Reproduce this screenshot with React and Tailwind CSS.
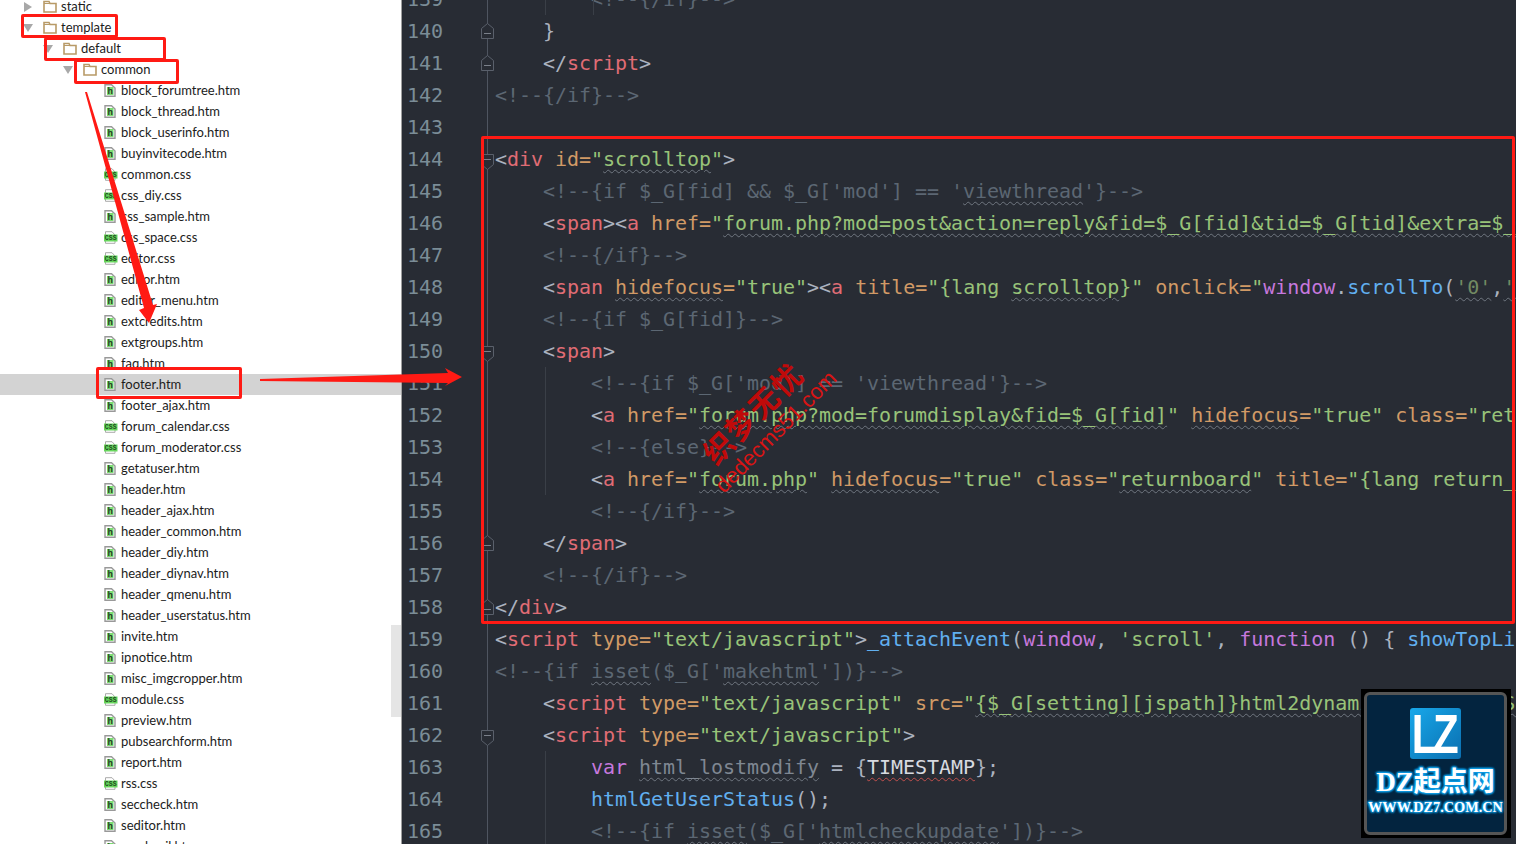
const files = [
  'block_forumtree.htm', 'block_thread.htm', 'block_userinfo.htm', 'buyinvitecode.htm', 'common.css', 'css_diy.css',
  'css_sample.htm', 'css_space.css', 'editor.css', 'editor.htm', 'editor_menu.htm', 'extcredits.htm', 'extgroups.htm',
  'faq.htm', 'footer.htm', 'footer_ajax.htm', 'forum_calendar.css', 'forum_moderator.css', 'getatuser.htm', 'header.htm',
  'header_ajax.htm', 'header_common.htm', 'header_diy.htm', 'header_diynav.htm', 'header_qmenu.htm',
  'header_userstatus.htm', 'invite.htm', 'ipnotice.htm', 'misc_imgcropper.htm', 'module.css', 'preview.htm',
  'pubsearchform.htm', 'report.htm', 'rss.css', 'seccheck.htm', 'seditor.htm', 'sendmail.htm',
];

const colors = {
  p: 'text-[#abb2bf]',
  c: 'text-[#5c6773]',
  t: 'text-[#e06c75]',
  a: 'text-[#d19a66]',
  s: 'text-[#98c379]',
  d: 'text-[#728a62]',
  b: 'text-[#61afef]',
  v: 'text-[#c678dd]',
  g: 'text-[#7f8792]',
  w: 'text-[#d7dae0]',
};

const wavy = 'underline decoration-wavy decoration-[0.5px] decoration-[#6f7680] underline-offset-[3px]';
const wavyRed = 'underline decoration-wavy decoration-[0.5px] decoration-[#c0504d] underline-offset-[3px]';

// [line no, indent, fold marker, guides, tokens] - token is [colour, text, underline]
const lines = [
  [139, 8, null, [48, 96], [['c', '<!--{/if}-->']]],
  [140, 4, 'close', [], [['p', '}']]],
  [141, 4, 'close', [], [['p', '</'], ['t', 'script'], ['p', '>']]],
  [142, 0, null, [], [['c', '<!--{/if}-->']]],
  [143, 0, null, [], []],
  [144, 0, 'open', [], [['p', '<'], ['t', 'div'], ['a', ' id='], ['s', '"'], ['s', 'scrolltop', 1], ['s', '"'], ['p', '>']]],
  [145, 4, null, [], [['c', "<!--{if $_G[fid] && $_G['mod'] == '"], ['c', 'viewthread', 1], ['c', "'}-->"]]],
  [146, 4, null, [], [['p', '<'], ['t', 'span'], ['p', '><'], ['t', 'a'], ['a', ' href='], ['s', '"'], ['s', 'forum.php?mod=post&action=reply&fid=$_G[fid]&tid=$_G[tid]&extra=$_G[extra]', 1]]],
  [147, 4, null, [], [['c', '<!--{/if}-->']]],
  [148, 4, null, [], [['p', '<'], ['t', 'span'], ['a', ' '], ['a', 'hidefocus', 1], ['a', '='], ['s', '"true"'], ['p', '><'], ['t', 'a'], ['a', ' title='], ['s', '"{lang '], ['s', 'scrolltop', 1], ['s', '}"'], ['a', ' onclick='], ['s', '"'], ['v', 'window'], ['p', '.'], ['b', 'scrollTo'], ['p', '('], ['d', "'0'", 1], ['p', ','], ['d', "'0'", 1]]],
  [149, 4, null, [], [['c', '<!--{if $_G[fid]}-->']]],
  [150, 4, 'open', [], [['p', '<'], ['t', 'span'], ['p', '>']]],
  [151, 8, null, [48], [['c', "<!--{if $_G['mod'] == 'viewthread'}-->"]]],
  [152, 8, null, [48], [['p', '<'], ['t', 'a'], ['a', ' href='], ['s', '"'], ['s', 'forum.php?mod=forumdisplay&fid=$_G[fid]', 1], ['s', '"'], ['a', ' '], ['a', 'hidefocus', 1], ['a', '='], ['s', '"true"'], ['a', ' class='], ['s', '"returnboard"']]],
  [153, 8, null, [48], [['c', '<!--{else}-->']]],
  [154, 8, null, [48], [['p', '<'], ['t', 'a'], ['a', ' href='], ['s', '"'], ['s', 'forum.php', 1], ['s', '"'], ['a', ' '], ['a', 'hidefocus', 1], ['a', '='], ['s', '"true"'], ['a', ' class='], ['s', '"'], ['s', 'returnboard', 1], ['s', '"'], ['a', ' title='], ['s', '"{lang return_forum}"']]],
  [155, 8, null, [], [['c', '<!--{/if}-->']]],
  [156, 4, 'close', [], [['p', '</'], ['t', 'span'], ['p', '>']]],
  [157, 4, null, [], [['c', '<!--{/if}-->']]],
  [158, 0, 'close', [], [['p', '</'], ['t', 'div'], ['p', '>']]],
  [159, 0, null, [], [['p', '<'], ['t', 'script'], ['a', ' type='], ['s', '"text/javascript"'], ['p', '>'], ['b', '_attachEvent'], ['p', '('], ['v', 'window'], ['p', ', '], ['s', "'scroll'"], ['p', ', '], ['v', 'function'], ['p', ' () { '], ['b', 'showTopLink'], ['p', '(); });']]],
  [160, 0, null, [], [['c', '<!--{if '], ['c', 'isset', 1], ['c', "($_G['"], ['c', 'makehtml', 1], ['c', "'])}-->"]]],
  [161, 4, null, [], [['p', '<'], ['t', 'script'], ['a', ' type='], ['s', '"text/javascript"'], ['a', ' src='], ['s', '"'], ['s', '{$_G[setting][jspath]}html2dynamic.js?{VERHASH}', 1], ['s', '"'], ['p', '>']]],
  [162, 4, 'open', [], [['p', '<'], ['t', 'script'], ['a', ' type='], ['s', '"text/javascript"'], ['p', '>']]],
  [163, 8, null, [48], [['v', 'var'], ['g', ' '], ['g', 'html_lostmodify', 1], ['p', ' = {'], ['w', 'TIMESTAMP', 2], ['p', '};']]],
  [164, 8, null, [48], [['b', 'htmlGetUserStatus'], ['p', '();']]],
  [165, 8, null, [48], [['c', '<!--{if '], ['c', 'isset', 1], ['c', "($_G['"], ['c', 'htmlcheckupdate', 1], ['c', "'])}-->"]]],
];

const Arrow = ({ open }) => (
  <svg width="10" height="10" viewBox="0 0 10 10" className="mr-[10px] shrink-0">
    {open ? <path d="M0 1h10L5 9z" fill="#a8a8a8" /> : <path d="M1 0l8 5-8 5z" fill="#a8a8a8" />}
  </svg>
);

const Folder = () => (
  <svg width="14" height="13" viewBox="0 0 14 13" className="mr-[4px] shrink-0">
    <path d="M1 12V1.5h5l1 2h6V12z" fill="#fff" stroke="#b89a67" strokeWidth="1.6" />
    <path d="M1 3.5h12" stroke="#b89a67" strokeWidth="1" />
  </svg>
);

const HtmIcon = () => (
  <svg width="13" height="13" viewBox="0 0 13 13" className="mr-[4px] shrink-0">
    <path d="M1 .7h6.5L11 4v8.3H1z" fill="#fff" stroke="#999" strokeWidth="1.4" />
    <rect x="3" y="3" width="6.5" height="8" fill="#7ddc72" />
    <text x="6.2" y="10" textAnchor="middle" fontSize="9" fontWeight="700" fontFamily="Liberation Mono, monospace" fill="#1e3a22">h</text>
  </svg>
);

const CssIcon = () => (
  <svg width="14" height="13" viewBox="0 0 14 13" className="mr-[3px] shrink-0">
    <path d="M1.5.7h6.5L11 4v8.3H1.5z" fill="#fff" stroke="#aaa" />
    <rect x="0" y="3.5" width="13.5" height="7" fill="#67d65c" />
    <text x="6.7" y="9.3" textAnchor="middle" fontSize="6.5" fontWeight="700" fontFamily="Liberation Mono, monospace" fill="#1c4a1e">CSS</text>
  </svg>
);

const FolderRow = ({ pad, open, name }) => (
  <div className={`flex items-center h-[21px] ${pad}`}>
    <Arrow open={open} />
    <Folder />
    <span>{name}</span>
  </div>
);

const FileRow = ({ name }) => (
  <div className={`flex items-center h-[21px] pl-[104px] ${name === 'footer.htm' ? 'bg-[#d3d3d3]' : ''}`}>
    {name.endsWith('.css') ? <CssIcon /> : <HtmIcon />}
    <span>{name}</span>
  </div>
);

const Fold = ({ kind }) => (
  <svg width="15" height="32" viewBox="0 0 15 32" className="shrink-0">
    <path d="M7.5 0v32" stroke="#4f5560" />
    {kind === 'open' && <path d="M1.5 11.5h12v10l-6 5-6-5z" fill="#282c34" stroke="#5a606b" />}
    {kind === 'open' && <path d="M4 16.5h7" stroke="#7a808a" />}
    {kind === 'close' && <path d="M1.5 23.5v-10l6-5 6 5v10z" fill="#282c34" stroke="#5a606b" />}
    {kind === 'close' && <path d="M4 18.5h7" stroke="#7a808a" />}
  </svg>
);

const indents = { 0: '', 4: 'pl-[48px]', 8: 'pl-[96px]' };
const guideLeft = { 48: 'left-[50px]', 96: 'left-[98px]' };

const CodeLine = ({ line }) => {
  const [no, indent, fold, guides, tokens] = line;
  return (
    <div className="flex h-8 leading-8">
      <span className="w-[78px] shrink-0 pl-[5px] text-[#7b8d97]">{no}</span>
      <Fold kind={fold} />
      <div className={`relative flex-1 min-w-0 whitespace-pre ${indents[indent]}`}>
        {guides.map((g) => (
          <span key={g} className={`absolute top-0 bottom-0 w-px bg-[#3a3f47] ${guideLeft[g]}`} />
        ))}
        {tokens.map(([k, text, u], i) => (
          <span key={i} className={`${colors[k]} ${u === 1 ? wavy : ''} ${u === 2 ? wavyRed : ''}`}>{text}</span>
        ))}
      </div>
    </div>
  );
};

const Box = ({ className }) => (
  <div className={`absolute border-[3px] border-[#ff1a14] rounded-[2px] ${className}`} />
);

const DzLogo = () => (
  <div className="absolute left-[1361px] top-[689px] w-[150px] h-[149px] bg-black p-[3px] pr-1">
    <div className="h-full border-[3px] border-[#555] rounded-md bg-[#03243f] flex flex-col items-center pt-[13px]">
      <div className="w-[51px] h-[51px] shrink-0 overflow-hidden rounded-[3px] bg-gradient-to-br from-[#18a8ea] to-[#0b6fb0] flex items-center justify-center font-['Liberation_Sans',sans-serif] font-bold text-white text-[56px] leading-none">
        <span className="block scale-x-75 tracking-[-6px] pr-[6px]">LZ</span>
      </div>
      <div className="mt-[9px] text-[27px] leading-[28px] font-bold text-white whitespace-nowrap font-['Liberation_Serif','Noto_Sans_CJK_SC',serif] [text-shadow:0_0_2px_#0d9be4,0_0_3px_#0d9be4,1px_1px_2px_#0d9be4,-1px_-1px_2px_#0d9be4,1px_-1px_2px_#0d9be4,-1px_1px_2px_#0d9be4]">
        DZ起点网
      </div>
      <div className="mt-[3px] text-[14.3px] leading-[16px] font-bold text-white whitespace-nowrap font-['Liberation_Serif',serif] [text-shadow:0_0_2px_#0d9be4,1px_1px_2px_#0d9be4,-1px_-1px_2px_#0d9be4,1px_-1px_2px_#0d9be4,-1px_1px_2px_#0d9be4]">
        WWW.DZ7.COM.CN
      </div>
    </div>
  </div>
);

export default function App() {
  return (
    <div className="relative flex w-[1516px] h-[844px] overflow-hidden bg-white">
      {/* file tree */}
      <div className="relative w-[402px] shrink-0 h-full overflow-hidden border-r border-[#a0a0a0] font-['Lato',sans-serif] text-[13px] text-[#1c1c1c]">
        <div className="-mt-[4px]">
          <FolderRow pad="pl-[23px]" name="static" />
          <FolderRow pad="pl-[23px]" open name="template" />
          <FolderRow pad="pl-[43px]" open name="default" />
          <FolderRow pad="pl-[63px]" open name="common" />
          {files.map((f) => <FileRow key={f} name={f} />)}
        </div>
        <div className="absolute right-0 top-[625px] w-[10px] h-[92px] bg-[#e5e5e5]" />
      </div>

      {/* editor */}
      <div className="flex-1 min-w-0 h-full overflow-hidden bg-[#282c34] font-['DejaVu_Sans_Mono',monospace] text-[20px] tracking-[-0.04px]">
        <div className="-mt-[17px]">
          {lines.map((l) => <CodeLine key={l[0]} line={l} />)}
        </div>
      </div>

      {/* red annotations */}
      <Box className="left-[21px] top-[14px] w-[97px] h-[24px]" />
      <Box className="left-[44px] top-[37px] w-[122px] h-[24px]" />
      <Box className="left-[74px] top-[59px] w-[105px] h-[25px]" />
      <Box className="left-[96px] top-[367px] w-[146px] h-[32px]" />
      <Box className="left-[481px] top-[136px] w-[1034px] h-[488px]" />
      <svg width="1516" height="844" viewBox="0 0 1516 844" className="absolute left-0 top-0 pointer-events-none">
        <polygon points="85,92 87,92 153,305 157,304 149,323 139,310 144,308" fill="#ff1a14" />
        <polygon points="260,379 448,373 445,368 462,377 445,386 448,383 260,381" fill="#ff1a14" />
      </svg>

      {/* watermark */}
      <div className="absolute left-[752px] top-[412px] -translate-x-1/2 -translate-y-1/2 -rotate-45 whitespace-nowrap text-[#c00a0a] font-bold text-[30px] leading-none tracking-[2px] font-['Noto_Sans_CJK_SC',sans-serif]">
        织梦无忧
      </div>
      <div className="absolute left-[776px] top-[432px] -translate-x-1/2 -translate-y-1/2 -rotate-45 whitespace-nowrap text-[#d81414] text-[22px] leading-none font-['Liberation_Sans',sans-serif]">
        dedecms51.com
      </div>

      <DzLogo />
    </div>
  );
}
